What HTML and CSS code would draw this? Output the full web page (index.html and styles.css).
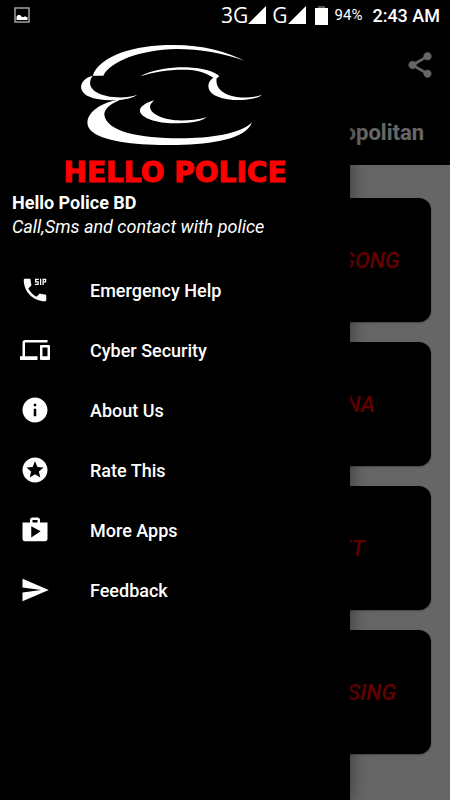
FILE: index.html
```html
<!DOCTYPE html>
<html lang="en">
<head>
    <meta charset="UTF-8">
    <meta name="viewport" content="width=device-width, initial-scale=1.0">
    <title>Hello Police BD</title>
    <link rel="stylesheet" href="styles.css">
</head>
<body>
    <header class="status-bar">
        <svg class="picture-icon" viewBox="0 0 16 16">
            <rect x="1" y="1" width="14" height="14" fill="none" stroke="#aaa" stroke-width="1.4"/>
            <path d="M2.5 13V9.5L4 8h2l2 2h2l1-1 1 1h1.500v3z" fill="#fff"/>
        </svg>
        <div class="status-right">
            <span class="network">3G</span>
            <svg class="signal" viewBox="0 0 18 18"><path d="M0 18L18 0v18z"/></svg>
            <span class="network second">G</span>
            <svg class="signal" viewBox="0 0 18 18"><path d="M0 18L18 0v18z"/></svg>
            <svg class="battery" viewBox="0 0 13 19"><path d="M3 0h7v3H3z" fill="#555"/><path d="M0 2h13v17H0z"/></svg>
            <span class="percent">94%</span>
            <span class="time">2:43 AM</span>
        </div>
    </header>

    <div class="app-bar">
        <div class="toolbar">
            <button type="button" class="share-btn" aria-label="Share">
                <svg class="icon" viewBox="0 0 24 24"><path d="M18 16.080c-.76 0-1.440.3-1.960.77L8.910 12.700c.05-.23.09-.46.09-.7s-.04-.47-.09-.7l7.050-4.110c.54.5 1.250.81 2.040.81 1.660 0 3-1.340 3-3s-1.340-3-3-3-3 1.340-3 3c0 .24.04.47.09.7L8.040 9.810C7.500 9.310 6.790 9 6 9c-1.660 0-3 1.340-3 3s1.340 3 3 3c.79 0 1.500-.31 2.040-.81l7.120 4.160c-.05.21-.08.43-.08.65 0 1.610 1.310 2.920 2.920 2.920s2.920-1.310 2.920-2.920-1.310-2.920-2.920-2.920z"/></svg>
            </button>
        </div>
        <h1 class="page-title">Metropolitan</h1>
    </div>

    <main class="city-grid">
        <a href="#" class="city">CHITTAGONG</a>
        <a href="#" class="city">KHULNA</a>
        <a href="#" class="city">SYLET</a>
        <a href="#" class="city">MYMENSING</a>
    </main>

    <div class="scrim"></div>

    <aside class="drawer">
        <div class="drawer-header">
            <svg class="logo" viewBox="-15 0 720 330">
                <path d="M98 122C120 62 220 30 340 30C430 30 500 50 553 77C490 55 420 42 350 42C240 44 150 80 130 122Z"/>
                <path d="M98 122C60 132 50 165 85 184C110 196 145 197 175 195C202 192 220 188 232 179C210 187 185 189 160 186C105 180 75 155 98 122Z"/>
                <path d="M170 195C100 210 70 250 87 280C115 322 240 332 350 330C460 328 558 312 576 262C540 298 450 310 360 310C240 310 140 290 133 240C132 220 155 203 190 191Z"/>
                <path d="M240 124C280 102 340 96 380 97C430 99 465 110 478 124L470 130C465 155 485 180 530 186C560 190 585 187 606 179C590 192 560 196 520 195C470 190 445 175 445 152C446 140 452 134 460 128C430 108 400 104 370 104C320 104 280 111 240 124Z"/>
                <path d="M282 196C250 206 238 218 240 230C250 256 310 266 355 265C400 264 425 258 440 247C410 256 375 257 345 256C295 250 262 230 272 208Z"/>
            </svg>
            <div class="brand">HELLO POLICE</div>
            <h2 class="app-name">Hello Police BD</h2>
            <p class="tagline">Call,Sms and contact with police</p>
        </div>
        <nav class="menu">
            <a href="#" class="menu-item">
                <svg class="icon" viewBox="0 0 24 24"><path d="M17 3h-1v5h1V3zm-2 2h-2V4h2V3h-3v3h2v1h-2v1h3V5zm3-2v5h1V6h2V3h-3zm2 2h-1V4h1v1zm0 10.500c-1.250 0-2.450-.2-3.570-.57-.35-.11-.74-.03-1.010.24l-2.200 2.200c-2.830-1.440-5.150-3.750-6.590-6.590l2.200-2.210c.27-.26.35-.65.24-1C8.700 6.450 8.500 5.250 8.500 4c0-.55-.45-1-1-1H4c-.55 0-1 .45-1 1 0 9.390 7.610 17 17 17 .55 0 1-.45 1-1v-3.500c0-.55-.45-1-1-1z"/></svg>
                Emergency Help
            </a>
            <a href="#" class="menu-item">
                <svg class="icon" viewBox="0 0 24 24"><path d="M4 6h18V4H4c-1.100 0-2 .9-2 2v11H0v3h14v-3H4V6zm19 2h-6c-.55 0-1 .45-1 1v10c0 .55.45 1 1 1h6c.55 0 1-.45 1-1V9c0-.55-.45-1-1-1zm-1 9h-4v-7h4v7z"/></svg>
                Cyber Security
            </a>
            <a href="#" class="menu-item">
                <svg class="icon" viewBox="0 0 24 24"><path d="M12 2C6.480 2 2 6.480 2 12s4.480 10 10 10 10-4.480 10-10S17.520 2 12 2zm1 15h-2v-6h2v6zm0-8h-2V7h2v2z"/></svg>
                About Us
            </a>
            <a href="#" class="menu-item">
                <svg class="icon" viewBox="0 0 24 24"><path d="M11.990 2C6.470 2 2 6.480 2 12s4.470 10 9.990 10C17.520 22 22 17.520 22 12S17.520 2 11.990 2zm4.240 16L12 15.450 7.770 18l1.120-4.810-3.730-3.230 4.920-.42L12 5l1.920 4.530 4.920.42-3.730 3.230L16.230 18z"/></svg>
                Rate This
            </a>
            <a href="#" class="menu-item">
                <svg class="icon" viewBox="0 0 24 24"><path d="M16 6V4c0-1.110-.89-2-2-2h-4c-1.110 0-2 .89-2 2v2H2v13c0 1.110.89 2 2 2h16c1.110 0 2-.89 2-2V6h-6zm-6-2h4v2h-4V4zM9 18V9l7.500 4L9 18z"/></svg>
                More Apps
            </a>
            <a href="#" class="menu-item">
                <svg class="icon" viewBox="0 0 24 24"><path d="M2.010 21L23 12 2.010 3 2 10l15 2-15 2z"/></svg>
                Feedback
            </a>
        </nav>
    </aside>
</body>
</html>
```
FILE: styles.css
```css
* {
    box-sizing: border-box;
}

body {
    font-family: Roboto, sans-serif;
    background-color: #fff;
    color: #fff;
    margin: 0;
    min-height: 100vh;
    position: relative;
}

h1, h2, p {
    margin: 0;
}

a {
    color: inherit;
    text-decoration: none;
}

svg {
    display: block;
    fill: currentColor;
    flex: none;
}

.icon {
    width: 30px;
    height: 30px;
}

/* Status bar stays above the drawer */
.status-bar {
    display: flex;
    align-items: center;
    justify-content: space-between;
    height: 30px;
    padding: 0 10px 0 14px;
    background-color: #000;
    position: relative;
    z-index: 3;
}

.picture-icon {
    width: 16px;
    height: 16px;
}

.status-right {
    display: flex;
    align-items: center;
}

.network {
    font-family: "Open Sans", sans-serif;
    font-size: 21px;
    line-height: 30px;
}

.second {
    margin-left: 6px;
}

.signal {
    width: 18px;
    height: 18px;
}

.battery {
    width: 13px;
    height: 19px;
    margin-left: 9px;
}

.percent {
    font-size: 15px;
    margin-left: 7px;
}

.time {
    font-size: 18px;
    font-weight: 500;
    margin-left: 10px;
}

.app-bar {
    background-color: #000;
    padding-bottom: 16px;
}

.toolbar {
    display: flex;
    align-items: center;
    justify-content: flex-end;
    height: 70px;
    padding: 0 15px;
}

.share-btn {
    background: none;
    border: none;
    padding: 0;
    color: #fff;
    cursor: pointer;
}

.share-btn .icon {
    stroke: currentColor;
    stroke-width: 0.5;
}

.page-title {
    padding: 16px 26px 0;
    font-size: 22px;
    line-height: 33px;
    font-weight: 700;
    text-align: right;
}

.city-grid {
    display: grid;
    grid-template-columns: 1fr 1fr;
    gap: 20px;
    padding: 33px 19px;
}

.city {
    grid-column: 2;
    display: flex;
    align-items: center;
    justify-content: center;
    height: 124px;
    border-radius: 12px;
    background-color: #000;
    color: #f00;
    font-size: 22px;
    font-weight: 500;
    font-style: italic;
    box-shadow: 0 1px 2px rgba(0, 0, 0, 0.3);
}

.scrim {
    position: absolute;
    inset: 0;
    background-color: rgba(0, 0, 0, 0.6);
    z-index: 1;
}

.drawer {
    position: absolute;
    top: 0;
    bottom: 0;
    left: 0;
    width: 350px;
    max-width: 80%;
    padding-top: 35px;
    background-color: #000;
    box-shadow: 0 0 16px rgba(0, 0, 0, 0.5);
    z-index: 2;
}

.drawer-header {
    padding: 0 12px;
}

.logo {
    width: 240px;
    height: 110px;
    margin: 0 auto;
}

.brand {
    margin-top: 12px;
    color: #f00;
    font-family: "DejaVu Sans", sans-serif;
    font-size: 28px;
    line-height: 32px;
    font-weight: 700;
    text-align: center;
    white-space: nowrap;
    -webkit-text-stroke: 1px #f00;
}

.app-name {
    margin-top: 2px;
    font-size: 18px;
    line-height: 24px;
    font-weight: 700;
}

.tagline {
    font-size: 18px;
    line-height: 24px;
    font-style: italic;
}

.menu {
    padding-top: 21px;
}

.menu-item {
    display: flex;
    align-items: center;
    gap: 40px;
    height: 60px;
    padding: 0 20px;
    font-size: 18px;
    font-weight: 500;
}
```
